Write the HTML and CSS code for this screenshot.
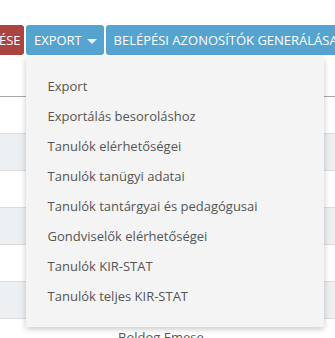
FILE: index.html
```html
<!DOCTYPE html>
<html lang="hu">
<head>
    <meta charset="UTF-8">
    <meta name="viewport" content="width=device-width, initial-scale=1.0">
    <title>Tanulók</title>

    <link rel="stylesheet" href="styles.css">
</head>
<body>

    <div class="toolbar">
        <button class="btn btn-danger">Tanulók törlése</button>

        <div class="dropdown">
            <button class="btn btn-primary">Export <span class="caret"></span></button>

            <ul class="dropdown-menu">
                <li>Export</li>
                <li>Exportálás besoroláshoz</li>
                <li>Tanulók elérhetőségei</li>
                <li>Tanulók tanügyi adatai</li>
                <li>Tanulók tantárgyai és pedagógusai</li>
                <li>Gondviselők elérhetőségei</li>
                <li>Tanulók KIR-STAT</li>
                <li>Tanulók teljes KIR-STAT</li>
            </ul>
        </div>

        <button class="btn btn-primary">Belépési azonosítók generálása</button>
    </div>

    <table class="list">
        <thead>
            <tr><th class="col-check"></th><th>Név</th></tr>
        </thead>
        <tbody>
            <tr><td class="col-check"></td><td></td></tr>
            <tr><td class="col-check"></td><td></td></tr>
            <tr><td class="col-check"></td><td></td></tr>
            <tr><td class="col-check"></td><td></td></tr>
            <tr><td class="col-check"></td><td></td></tr>
            <tr><td class="col-check"></td><td></td></tr>
            <tr><td class="col-check"></td><td>Boldog Emese</td></tr>
        </tbody>
    </table>

</body>
</html>
```

FILE: styles.css
```css
body
{
    margin: 0;
    background: white;
    font-family: "Open Sans", sans-serif;
    color: #555;
    overflow: hidden;
}
.toolbar
{
    display: flex;
    gap: 2px;
    padding-top: 25px;
    margin-left: -104px;
    width: 600px;
}
.btn
{
    flex-shrink: 0;
    height: 30px;
    padding: 0 8px;
    border: none;
    border-radius: 3px;
    color: white;
    font-family: "Open Sans", sans-serif;
    font-size: 13px;
    text-transform: uppercase;
    white-space: nowrap;
    cursor: pointer;
}
.btn-danger
{
    background: #ab4340;
    padding-right: 3px;
}
.btn-primary
{
    background: #55a4d0;
}
.dropdown
{
    position: relative;
}
.dropdown .btn
{
    width: 78px;
    padding-right: 6px;
}
.caret
{
    display: inline-block;
    margin-left: 2px;
    vertical-align: middle;
    border-top: 5px solid #eaf2f8;
    border-left: 5px solid transparent;
    border-right: 5px solid transparent;
}
.dropdown-menu
{
    position: absolute;
    top: 32px;
    left: 0;
    z-index: 10;
    width: 298px;
    margin: 0;
    padding: 14px 0 16px 0;
    list-style: none;
    background: #f4f4f4;
    box-shadow: 0 2px 6px 0 #20212440;
}
.dropdown-menu li
{
    padding-left: 22px;
    line-height: 30px;
    font-size: 13px;
    color: #555;
    white-space: nowrap;
}
.list
{
    width: 100%;
    border-collapse: collapse;
}
.list th
{
    height: 39px;
    border-bottom: 1px solid #a9a9a9;
    font-weight: normal;
    color: transparent;
}
.list td
{
    height: 36px;
    padding: 0 8px;
    border-bottom: 1px solid #dcdcdc;
    font-size: 13px;
    vertical-align: middle;
}
.list tbody tr:nth-child(even)
{
    background: #edf0f3;
}
.col-check
{
    width: 94px;
    padding: 0;
}
```
